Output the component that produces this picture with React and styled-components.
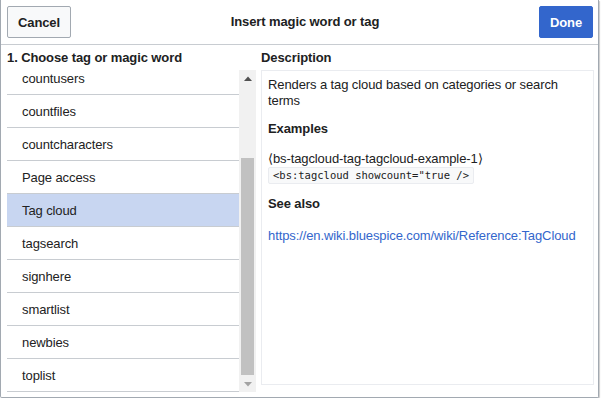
import React, { useLayoutEffect, useRef } from 'react';
import styled, { createGlobalStyle } from 'styled-components';

const GlobalStyle = createGlobalStyle`
  html, body {
    margin: 0;
    padding: 0;
    background: #fff;
  }
  body {
    font-family: "Liberation Sans", Arial, sans-serif;
    font-size: 13px;
    letter-spacing: -0.1px;
    color: #202122;
  }
`;

const Dialog = styled.div`
  box-sizing: border-box;
  width: 599px;
  height: 398px;
  border: 1px solid #a2a9b1;
  border-top: none;
  border-radius: 0 0 2px 2px;
  box-shadow: 1px 1px 1px rgba(0, 0, 0, 0.2);
  display: flex;
  flex-direction: column;
  background: #fff;
`;

const Header = styled.div`
  box-sizing: border-box;
  height: 45px;
  padding: 6px 5px 0 6px;
  border-bottom: 1px solid #c8ccd1;
  display: flex;
  align-items: flex-start;
`;

const Button = styled.button`
  box-sizing: border-box;
  height: 32px;
  width: ${p => p.$width}px;
  padding: 0;
  border-radius: 2px;
  font-family: inherit;
  font-size: 13px;
  letter-spacing: -0.1px;
  font-weight: bold;
  cursor: pointer;
  border: 1px solid ${p => (p.$primary ? '#36c' : '#a2a9b1')};
  background: ${p => (p.$primary ? '#36c' : '#f8f9fa')};
  color: ${p => (p.$primary ? '#fff' : '#202122')};
`;

const Title = styled.div`
  flex: 1;
  text-align: center;
  font-weight: bold;
  line-height: 32px;
`;

const Body = styled.div`
  flex: 1;
  min-height: 0;
  display: flex;
  gap: 5px;
  padding: 5px 4px 6px 6px;
`;

const Column = styled.div`
  width: ${p => p.$width}px;
  display: flex;
  flex-direction: column;
`;

const Heading = styled.div`
  font-weight: bold;
  line-height: 16px;
  margin-bottom: 4px;
`;

const ListFrame = styled.div`
  flex: 1;
  min-height: 0;
  display: flex;
  margin-bottom: -1px;
`;

const List = styled.div`
  flex: 1;
  overflow: hidden;
`;

const Item = styled.div`
  box-sizing: border-box;
  height: 33px;
  padding: 2px 0 0 15px;
  line-height: 30px;
  border-bottom: 1px solid #c8ccd1;
  background: ${p => (p.$selected ? '#c8d6f1' : '#fff')};
  color: #222;
`;

const Track = styled.div`
  width: 17px;
  background: #f1f1f1;
  display: flex;
  flex-direction: column;
  align-items: center;
`;

const Arrow = styled.div`
  height: 17px;
  flex: ${p => (p.$grow ? 1 : 'none')};
  display: flex;
  align-items: ${p => (p.$down ? 'flex-end' : 'center')};
  padding-bottom: ${p => (p.$down ? '5px' : 0)};
  box-sizing: border-box;
  justify-content: center;
  width: 100%;
`;

const Thumb = styled.div`
  width: 13px;
  height: 217px;
  margin-top: 71px;
  background: #c1c1c1;
`;

const Description = styled.div`
  box-sizing: border-box;
  height: 315px;
  border: 1px solid #eaecf0;
  padding: 6px 6px;
  line-height: 16px;
`;

const Para = styled.p`
  margin: 0;
`;

const SubHeading = styled.div`
  font-weight: bold;
  margin: ${p => p.$top}px 0 ${p => p.$bottom}px;
`;

const Code = styled.code`
  display: inline-block;
  font-family: "DejaVu Sans Mono", "Liberation Mono", monospace;
  font-size: 10.5px;
  letter-spacing: 0;
  line-height: 15px;
  padding: 0 4px;
  background: #f8f9fa;
  border: 1px solid #eaecf0;
  border-radius: 2px;
  color: #202122;
`;

const LinkText = styled.a`
  color: #36c;
  text-decoration: none;
`;

const Triangle = ({ down }) => (
  <svg width="8" height="5" viewBox="0 0 8 5">
    <path d={down ? 'M0 0 H8 L4 4.5 Z' : 'M0 5 H8 L4 0.5 Z'} fill={down ? '#a3a3a3' : '#505050'} />
  </svg>
);

const items = [
  'countusers',
  'countfiles',
  'countcharacters',
  'Page access',
  'Tag cloud',
  'tagsearch',
  'signhere',
  'smartlist',
  'newbies',
  'toplist',
];

const App = () => {
  const listRef = useRef(null);

  useLayoutEffect(() => {
    if (listRef.current) listRef.current.scrollTop = 8;
  }, []);

  return (
    <>
      <GlobalStyle />
      <Dialog>
        <Header>
          <Button $width={64}>Cancel</Button>
          <Title>Insert magic word or tag</Title>
          <Button $primary $width={54}>Done</Button>
        </Header>
        <Body>
          <Column $width={249}>
            <Heading>1. Choose tag or magic word</Heading>
            <ListFrame>
              <List ref={listRef}>
                {items.map(name => (
                  <Item key={name} $selected={name === 'Tag cloud'}>{name}</Item>
                ))}
              </List>
              <Track>
                <Arrow><Triangle /></Arrow>
                <Thumb />
                <Arrow $grow $down><Triangle down /></Arrow>
              </Track>
            </ListFrame>
          </Column>
          <Column $width={333}>
            <Heading>Description</Heading>
            <Description>
              <Para>Renders a tag cloud based on categories or search terms</Para>
              <SubHeading $top={12} $bottom={14}>Examples</SubHeading>
              <div>⟨bs-tagcloud-tag-tagcloud-example-1⟩</div>
              <Code>&lt;bs:tagcloud showcount="true /&gt;</Code>
              <SubHeading $top={12} $bottom={16}>See also</SubHeading>
              <LinkText href="#">https://en.wiki.bluespice.com/wiki/Reference:TagCloud</LinkText>
            </Description>
          </Column>
        </Body>
      </Dialog>
    </>
  );
};

export default App;
